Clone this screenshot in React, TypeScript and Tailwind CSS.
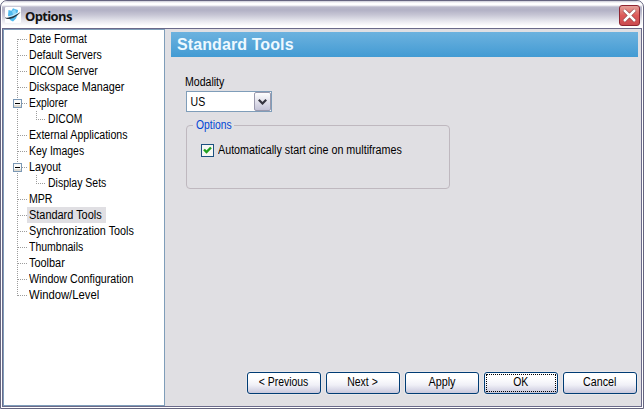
import React from 'react';

type Node = { label: string; child?: boolean; open?: boolean; selected?: boolean; fit: string };

const nodes: Node[] = [
  { label: 'Date Format', fit: 'scale-x-[0.87]' },
  { label: 'Default Servers', fit: 'scale-x-[0.88]' },
  { label: 'DICOM Server', fit: 'scale-x-[0.875]' },
  { label: 'Diskspace Manager', fit: 'scale-x-[0.9]' },
  { label: 'Explorer', open: true, fit: 'scale-x-[0.86]' },
  { label: 'DICOM', child: true, fit: 'scale-x-[0.86]' },
  { label: 'External Applications', fit: 'scale-x-[0.885]' },
  { label: 'Key Images', fit: 'scale-x-[0.87]' },
  { label: 'Layout', open: true, fit: 'scale-x-[0.89]' },
  { label: 'Display Sets', child: true, fit: 'scale-x-[0.875]' },
  { label: 'MPR', fit: 'scale-x-[0.88]' },
  { label: 'Standard Tools', selected: true, fit: 'scale-x-[0.91]' },
  { label: 'Synchronization Tools', fit: 'scale-x-[0.9]' },
  { label: 'Thumbnails', fit: 'scale-x-[0.875]' },
  { label: 'Toolbar', fit: 'scale-x-[0.91]' },
  { label: 'Window Configuration', fit: 'scale-x-[0.89]' },
  { label: 'Window/Level', fit: 'scale-x-[0.94]' },
];

function TreeLines({ node, first, last }: { node: Node; first: boolean; last: boolean }) {
  const dots = { stroke: '#9c9c9c', strokeDasharray: '1 1', strokeWidth: 1 };
  return (
    <svg width={node.child ? 42 : 23} height="16" className="shrink-0" shapeRendering="crispEdges">
      <line x1="13.5" x2="13.5" y1={first ? 8 : 0} y2={last ? 9 : 16} {...dots} />
      {node.child ? (
        <>
          <line x1="32.5" x2="32.5" y1="0" y2="9" {...dots} />
          <line x1="32" x2="42" y1="8.5" y2="8.5" {...dots} />
        </>
      ) : (
        <line x1="14" x2="23" y1="8.5" y2="8.5" {...dots} />
      )}
      {node.open && (
        <>
          <rect x="9" y="4" width="9" height="9" rx="1" fill="#7b98b5" />
          <rect x="10" y="5" width="7" height="7" fill="#fbfbf9" />
          <rect x="10" y="10" width="7" height="2" fill="#dedbd2" />
          <rect x="11" y="8" width="5" height="1" fill="#000" />
        </>
      )}
    </svg>
  );
}

function Logo() {
  return (
    <svg width="16" height="16" viewBox="0 0 16 16" className="shrink-0">
      <rect width="16" height="16" rx="1" fill="#fdfeff" />
      <path d="M3.500 3l3 .8L8 1.200l2.500 1L13 3l-.5 5-1.500 3.500L8 14.500 5 13 3 8.500z" fill="#4fb9ee" />
      <path d="M7 4l3-1.500 1.500 4L8 8z" fill="#8ad6f9" />
      <path d="M0 10.500C4 11.300 10 9 15.500 5 12.500 9.300 7 12.200 2.800 12 1.200 11.900.2 11.300 0 10.500z" fill="#29333c" />
      <path d="M1 9.900C5 10 9 8.500 14 5.200" stroke="#fff" strokeWidth=".8" fill="none" />
    </svg>
  );
}

function Button({ label, fit, focused }: { label: string; fit: string; focused?: boolean }) {
  return (
    <button className="relative flex h-[22px] w-[74px] items-center justify-center rounded-[3px] border border-[#003c74] bg-linear-to-b from-white from-25% via-[#f0f0f7] via-60% to-[#c9c8dc] shadow-[0_0_0_1px_#e8e7ea]">
      <span className={`mb-[2px] whitespace-pre ${fit}`}>{label}</span>
      {focused && <span className="absolute inset-[1px] border border-dotted border-black" />}
    </button>
  );
}

export default function App() {
  return (
    <div className="h-[409px] w-[644px] overflow-hidden bg-white font-['Liberation_Sans',sans-serif] text-[12px] leading-4 text-black">
      <div className="flex h-full flex-col rounded-t-[7px] border border-[#65647f] bg-white p-px pt-0">
        <header className="flex h-[27px] shrink-0 items-center rounded-t-[6px] bg-[linear-gradient(to_bottom,#c9c8d5_0px,#ffffff_2px,#ffffff_4px,#b9b8ca_6px,#b2b1c5_9px,#c7c6d5_14px,#e7e7ee_20px,#ffffff_25px,#ffffff_27px)] pr-[2px] pl-[3px]">
          <Logo />
          <h1 className="relative top-px ml-1 font-['Open_Sans',sans-serif] text-[13px] font-bold tracking-[-0.65px] text-[#141414]">Options</h1>
          <button aria-label="Close" className="relative top-px ml-auto flex h-[21px] w-[21px] items-center justify-center rounded-[3px] border border-[#8f2530] bg-linear-to-b from-[#e3a09a] via-[#dc5a5a] to-[#cb4b50]">
            <svg width="15" height="15" viewBox="0 0 15 15" className="shrink-0">
              <path d="M2 2l11 11M13 2l-11 11" stroke="#7e3135" strokeWidth="3.800" />
              <path d="M2 2l11 11M13 2l-11 11" stroke="#fff" strokeWidth="2.600" />
            </svg>
          </button>
        </header>
        <main className="flex min-h-0 flex-1 border border-[#6b6a8a] bg-[#e0dfe3]">
          <nav className="w-[162px] shrink-0 border border-[#7f9db9] bg-white pt-px">
            {nodes.map((node, i) => (
              <div key={node.label} className="flex h-4 items-center">
                <TreeLines node={node} first={i === 0} last={i === nodes.length - 1} />
                <span className={`h-4 pl-[2px] whitespace-nowrap ${node.selected ? 'w-[79px] bg-[#e0dfe3]' : ''}`}>
                  <span className={`block origin-left leading-4 ${node.fit}`}>{node.label}</span>
                </span>
              </div>
            ))}
          </nav>
          <section className="flex min-w-0 flex-1 flex-col pt-[3px] pr-[3px] pl-[6px]">
            <h2 className="flex h-[25px] shrink-0 items-center bg-linear-to-b from-[#6cb2df] to-[#429bd3] pl-[6px] text-[16px] font-bold tracking-[0.1px] text-[#eef9ff]">Standard Tools</h2>
            <div className="ml-[15px] pt-[17px]">
              <label className="-ml-px block h-[17px] origin-left scale-x-[0.88]">Modality</label>
              <div className="flex h-[21px] w-[86px] border border-[#7f9db9] bg-white">
                <span className="flex-1 origin-left scale-x-[0.88] pl-1 leading-5">US</span>
                <span className="flex h-[19px] w-[17px] items-center justify-center rounded-[2px] border border-[#9a99ad] bg-linear-to-b from-white to-[#c5c4d8]">
                  <svg width="9" height="6" viewBox="0 0 9 6"><path d="M.8.8l3.700 3.700L8.200.8" fill="none" stroke="#353540" strokeWidth="2.200" /></svg>
                </span>
              </div>
              <fieldset className="mt-[5px] h-[72px] w-[264px] rounded-[4px] border border-[#bfb8bf] pt-[9px] pl-[14px]">
                <legend className="ml-[-8px] h-4 w-[41px] px-[3px] text-[#0046d5]">
                  <span className="block origin-left scale-x-[0.86]">Options</span>
                </legend>
                <label className="flex items-center">
                  <span className="flex h-[13px] w-[13px] items-center justify-center border border-[#1c5180] bg-[#f7f7f4]">
                    <svg width="9" height="9" viewBox="0 0 9 9" className="shrink-0"><path d="M1 3.500l2.500 2.500L8 1.500" fill="none" stroke="#21a121" strokeWidth="2.400" /></svg>
                  </span>
                  <span className="mb-px ml-1 origin-left scale-x-[0.895] whitespace-nowrap">Automatically start cine on multiframes</span>
                </label>
              </fieldset>
            </div>
            <footer className="mt-auto mr-px mb-[12px] flex justify-end gap-[5px]">
              <Button label="< Previous" fit="scale-x-[0.87]" />
              <Button label="Next >" fit="scale-x-[0.87]" />
              <Button label="Apply" fit="scale-x-[0.9]" />
              <Button label="OK" fit="scale-x-[0.87]" focused />
              <Button label="Cancel" fit="scale-x-[0.89]" />
            </footer>
          </section>
        </main>
      </div>
    </div>
  );
}
